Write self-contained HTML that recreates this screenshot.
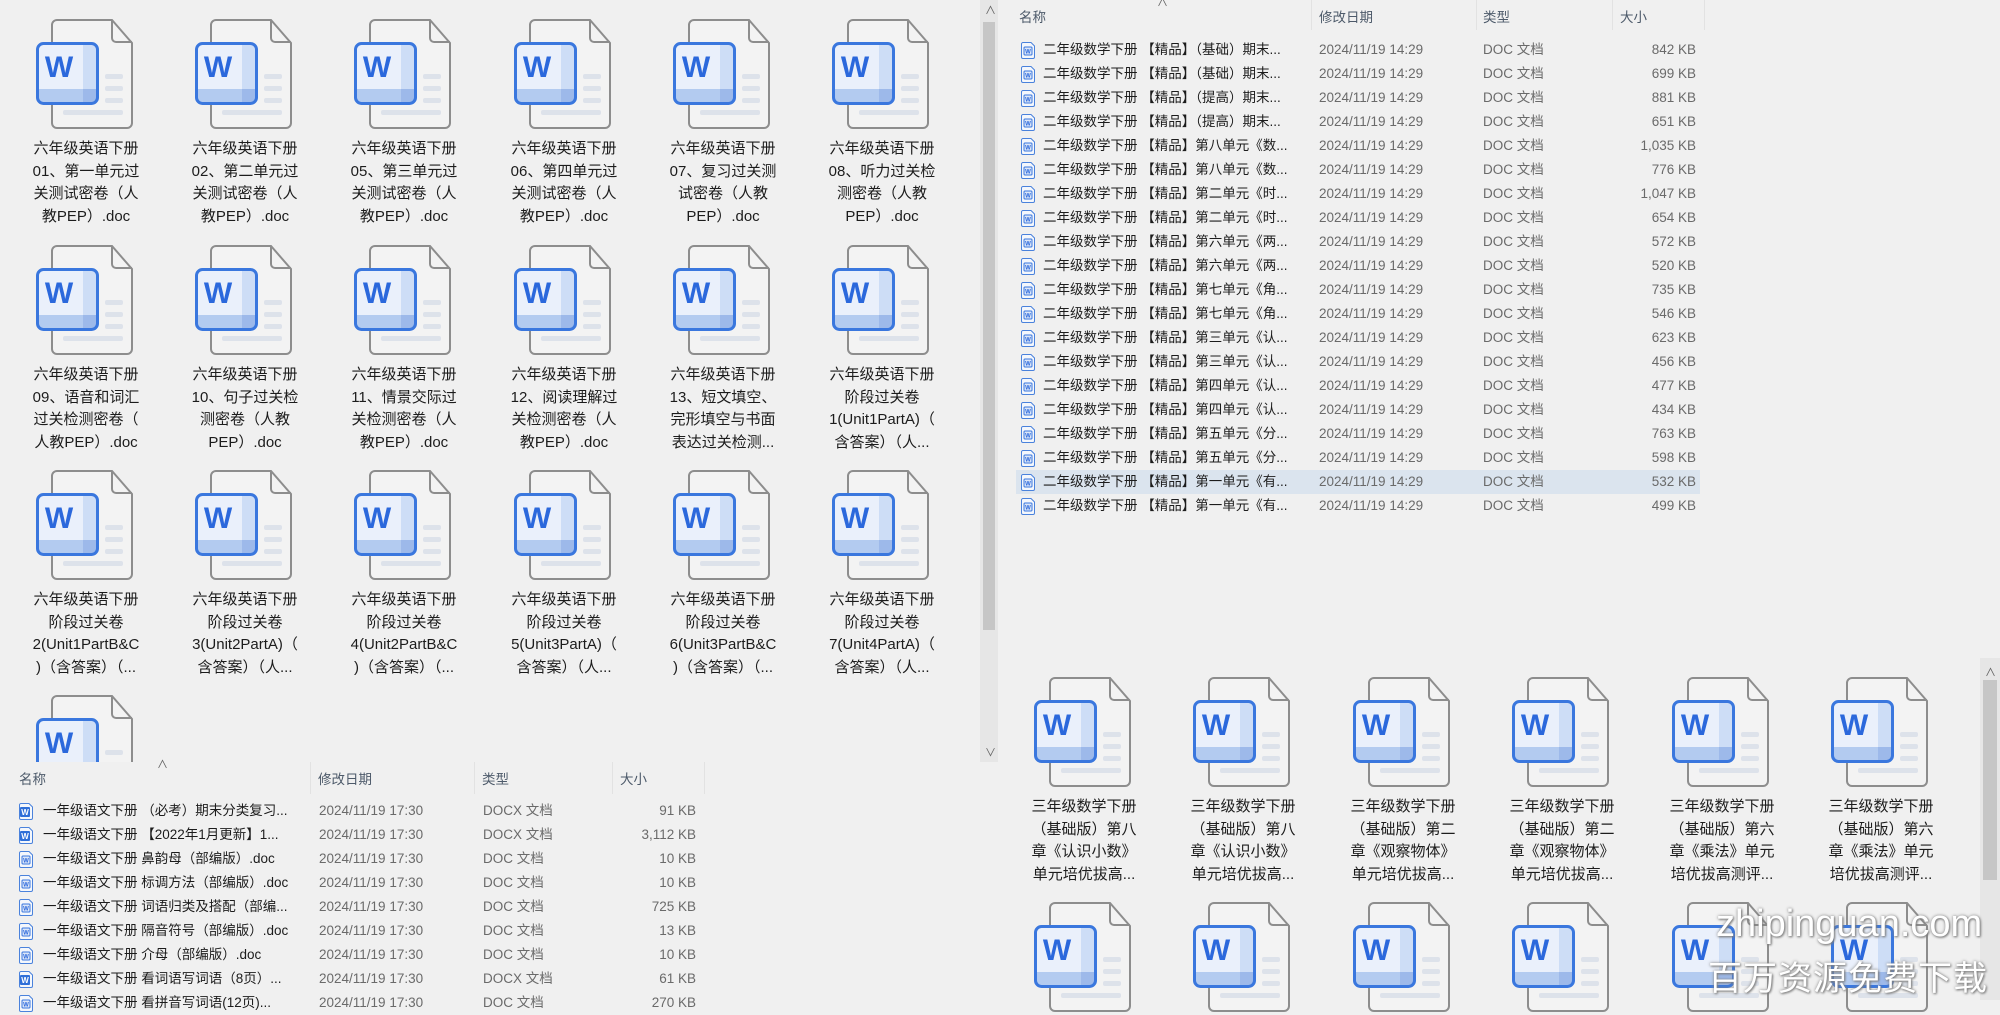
<!DOCTYPE html>
<html><head><meta charset="utf-8"><style>
*{margin:0;padding:0;box-sizing:border-box}
body{width:2000px;height:1000px;overflow:hidden;background:#f0f0f0;font-family:"Liberation Sans","Noto Sans CJK SC",sans-serif;position:relative}
.ic{position:absolute;width:98px;height:110px}
.lb{position:absolute;width:130px;text-align:center;font-size:15px;line-height:22.5px;color:#1c1c1c;white-space:nowrap}
.clip{position:absolute;overflow:hidden}
.hd{position:absolute;font-size:13.5px;color:#4d5a6a}
.sep{position:absolute;width:1px;background:#e2e2e2}
.r{position:absolute;height:24px;font-size:13.5px;line-height:24px;white-space:nowrap}
.r .n{position:absolute;color:#1c1c1c}
.r .d,.r .t{position:absolute;color:#6a6a6a}
.r .s{position:absolute;color:#6a6a6a;text-align:right;width:100px}
.r svg{position:absolute;top:4px}
.sb{position:absolute;background:#e6e6e6}
.th{position:absolute;background:#c6c6c6}
.ar{position:absolute;font-size:11px;color:#606060}
</style></head><body>
<svg width="0" height="0" style="position:absolute">
<defs>
<symbol id="wi" viewBox="0 0 98 110">
<path d="M21 1 H76 L96 24 V104 a5 5 0 0 1 -5 5 H21 a5 5 0 0 1 -5 -5 V6 a5 5 0 0 1 5 -5 Z" fill="#f3f3f3" stroke="#8d8d8d" stroke-width="2"/>
<path d="M76 1 V19 a4 4 0 0 0 4 4 H96" fill="none" stroke="#8d8d8d" stroke-width="2"/>
<rect x="69" y="55" width="18" height="5" rx="2" fill="#dde2ea"/>
<rect x="69" y="67" width="18" height="5" rx="2" fill="#dde2ea"/>
<rect x="69" y="79" width="18" height="5" rx="2" fill="#dde2ea"/>
<rect x="27" y="91" width="60" height="5" rx="2" fill="#dde2ea"/>
<rect x="1.5" y="24.5" width="60" height="60" rx="6" fill="#eaf0fb"/>
<rect x="47" y="26" width="13" height="57" fill="#cdddf6"/>
<rect x="3" y="70" width="57" height="13" fill="#b3cbf0"/>
<rect x="47" y="70" width="13" height="13" fill="#9db9ea"/>
<rect x="1.5" y="24.5" width="60" height="60" rx="6" fill="none" stroke="#3a77de" stroke-width="3"/>
<text x="23" y="58" font-family="Liberation Sans" font-weight="bold" font-size="30" fill="#2b68dc" text-anchor="middle">W</text>
</symbol>
<symbol id="sd" viewBox="0 0 14 17">
<path d="M2 .5 H10 L13.5 4 V15 a1.5 1.5 0 0 1 -1.5 1.5 H2 a1.5 1.5 0 0 1 -1.5 -1.5 V2 a1.5 1.5 0 0 1 1.5 -1.5Z" fill="#f4f7fc" stroke="#4a82dc"/>
<rect x="3" y="5" width="8" height="8" rx="1" fill="#dbe6f8" stroke="#3a77de"/>
<text x="7" y="11.5" font-size="6" font-family="Liberation Sans" font-weight="bold" fill="#2b68dc" text-anchor="middle">W</text>
</symbol>
<symbol id="sx" viewBox="0 0 14 17">
<path d="M2 .5 H10 L13.5 4 V15 a1.5 1.5 0 0 1 -1.5 1.5 H2 a1.5 1.5 0 0 1 -1.5 -1.5 V2 a1.5 1.5 0 0 1 1.5 -1.5Z" fill="#f4f7fc" stroke="#4a82dc"/>
<rect x="1" y="4" width="10" height="10" rx="1" fill="#2f6fd8"/>
<text x="6" y="12" font-size="8" font-family="Liberation Sans" font-weight="bold" fill="#fff" text-anchor="middle">W</text>
</symbol>
</defs></svg>

<!-- top-left grid -->
<div class="clip" style="left:0;top:0;width:978px;height:762px">
<svg class="ic" style="left:36px;top:19px"><use href="#wi"/></svg>
<svg class="ic" style="left:195px;top:19px"><use href="#wi"/></svg>
<svg class="ic" style="left:354px;top:19px"><use href="#wi"/></svg>
<svg class="ic" style="left:514px;top:19px"><use href="#wi"/></svg>
<svg class="ic" style="left:673px;top:19px"><use href="#wi"/></svg>
<svg class="ic" style="left:832px;top:19px"><use href="#wi"/></svg>
<div class="lb" style="left:21px;top:138px">六年级英语下册<br>01、第一单元过<br>关测试密卷（人<br>教PEP）.doc</div>
<div class="lb" style="left:180px;top:138px">六年级英语下册<br>02、第二单元过<br>关测试密卷（人<br>教PEP）.doc</div>
<div class="lb" style="left:339px;top:138px">六年级英语下册<br>05、第三单元过<br>关测试密卷（人<br>教PEP）.doc</div>
<div class="lb" style="left:499px;top:138px">六年级英语下册<br>06、第四单元过<br>关测试密卷（人<br>教PEP）.doc</div>
<div class="lb" style="left:658px;top:138px">六年级英语下册<br>07、复习过关测<br>试密卷（人教<br>PEP）.doc</div>
<div class="lb" style="left:817px;top:138px">六年级英语下册<br>08、听力过关检<br>测密卷（人教<br>PEP）.doc</div>

<svg class="ic" style="left:36px;top:245px"><use href="#wi"/></svg>
<svg class="ic" style="left:195px;top:245px"><use href="#wi"/></svg>
<svg class="ic" style="left:354px;top:245px"><use href="#wi"/></svg>
<svg class="ic" style="left:514px;top:245px"><use href="#wi"/></svg>
<svg class="ic" style="left:673px;top:245px"><use href="#wi"/></svg>
<svg class="ic" style="left:832px;top:245px"><use href="#wi"/></svg>
<div class="lb" style="left:21px;top:364px">六年级英语下册<br>09、语音和词汇<br>过关检测密卷（<br>人教PEP）.doc</div>
<div class="lb" style="left:180px;top:364px">六年级英语下册<br>10、句子过关检<br>测密卷（人教<br>PEP）.doc</div>
<div class="lb" style="left:339px;top:364px">六年级英语下册<br>11、情景交际过<br>关检测密卷（人<br>教PEP）.doc</div>
<div class="lb" style="left:499px;top:364px">六年级英语下册<br>12、阅读理解过<br>关检测密卷（人<br>教PEP）.doc</div>
<div class="lb" style="left:658px;top:364px">六年级英语下册<br>13、短文填空、<br>完形填空与书面<br>表达过关检测...</div>
<div class="lb" style="left:817px;top:364px">六年级英语下册<br>阶段过关卷<br>1(Unit1PartA)（<br>含答案）（人...</div>

<svg class="ic" style="left:36px;top:470px"><use href="#wi"/></svg>
<svg class="ic" style="left:195px;top:470px"><use href="#wi"/></svg>
<svg class="ic" style="left:354px;top:470px"><use href="#wi"/></svg>
<svg class="ic" style="left:514px;top:470px"><use href="#wi"/></svg>
<svg class="ic" style="left:673px;top:470px"><use href="#wi"/></svg>
<svg class="ic" style="left:832px;top:470px"><use href="#wi"/></svg>
<div class="lb" style="left:21px;top:589px">六年级英语下册<br>阶段过关卷<br>2(Unit1PartB&amp;C<br>)（含答案）（...</div>
<div class="lb" style="left:180px;top:589px">六年级英语下册<br>阶段过关卷<br>3(Unit2PartA)（<br>含答案）（人...</div>
<div class="lb" style="left:339px;top:589px">六年级英语下册<br>阶段过关卷<br>4(Unit2PartB&amp;C<br>)（含答案）（...</div>
<div class="lb" style="left:499px;top:589px">六年级英语下册<br>阶段过关卷<br>5(Unit3PartA)（<br>含答案）（人...</div>
<div class="lb" style="left:658px;top:589px">六年级英语下册<br>阶段过关卷<br>6(Unit3PartB&amp;C<br>)（含答案）（...</div>
<div class="lb" style="left:817px;top:589px">六年级英语下册<br>阶段过关卷<br>7(Unit4PartA)（<br>含答案）（人...</div>

<svg class="ic" style="left:36px;top:695px"><use href="#wi"/></svg>
</div>
<div class="sb" style="left:980px;top:0;width:18px;height:762px"></div>
<div class="th" style="left:983px;top:22px;width:12px;height:608px"></div>
<div class="ar" style="left:985px;top:2px">&#8743;</div>
<div class="ar" style="left:985px;top:744px">&#8744;</div>

<!-- bottom-left list -->
<div class="ar" style="left:157px;top:756px">&#8743;</div>
<div class="hd" style="left:19px;top:768px">名称</div>
<div class="hd" style="left:318px;top:768px">修改日期</div>
<div class="hd" style="left:482px;top:768px">类型</div>
<div class="hd" style="left:620px;top:768px">大小</div>
<div class="sep" style="left:310px;top:762px;height:32px"></div>
<div class="sep" style="left:474px;top:762px;height:32px"></div>
<div class="sep" style="left:612px;top:762px;height:32px"></div>
<div class="sep" style="left:704px;top:762px;height:32px"></div>

<div class="r" style="left:0;top:799px;width:710px"><svg style="left:19px" width="14" height="17"><use href="#sx"/></svg><span class="n" style="left:43px">一年级语文下册 （必考）期末分类复习...</span><span class="d" style="left:319px">2024/11/19 17:30</span><span class="t" style="left:483px">DOCX 文档</span><span class="s" style="left:596px">91 KB</span></div>
<div class="r" style="left:0;top:823px;width:710px"><svg style="left:19px" width="14" height="17"><use href="#sx"/></svg><span class="n" style="left:43px">一年级语文下册 【2022年1月更新】1...</span><span class="d" style="left:319px">2024/11/19 17:30</span><span class="t" style="left:483px">DOCX 文档</span><span class="s" style="left:596px">3,112 KB</span></div>
<div class="r" style="left:0;top:847px;width:710px"><svg style="left:19px" width="14" height="17"><use href="#sd"/></svg><span class="n" style="left:43px">一年级语文下册 鼻韵母（部编版）.doc</span><span class="d" style="left:319px">2024/11/19 17:30</span><span class="t" style="left:483px">DOC 文档</span><span class="s" style="left:596px">10 KB</span></div>
<div class="r" style="left:0;top:871px;width:710px"><svg style="left:19px" width="14" height="17"><use href="#sd"/></svg><span class="n" style="left:43px">一年级语文下册 标调方法（部编版）.doc</span><span class="d" style="left:319px">2024/11/19 17:30</span><span class="t" style="left:483px">DOC 文档</span><span class="s" style="left:596px">10 KB</span></div>
<div class="r" style="left:0;top:895px;width:710px"><svg style="left:19px" width="14" height="17"><use href="#sd"/></svg><span class="n" style="left:43px">一年级语文下册 词语归类及搭配（部编...</span><span class="d" style="left:319px">2024/11/19 17:30</span><span class="t" style="left:483px">DOC 文档</span><span class="s" style="left:596px">725 KB</span></div>
<div class="r" style="left:0;top:919px;width:710px"><svg style="left:19px" width="14" height="17"><use href="#sd"/></svg><span class="n" style="left:43px">一年级语文下册 隔音符号（部编版）.doc</span><span class="d" style="left:319px">2024/11/19 17:30</span><span class="t" style="left:483px">DOC 文档</span><span class="s" style="left:596px">13 KB</span></div>
<div class="r" style="left:0;top:943px;width:710px"><svg style="left:19px" width="14" height="17"><use href="#sd"/></svg><span class="n" style="left:43px">一年级语文下册 介母（部编版）.doc</span><span class="d" style="left:319px">2024/11/19 17:30</span><span class="t" style="left:483px">DOC 文档</span><span class="s" style="left:596px">10 KB</span></div>
<div class="r" style="left:0;top:967px;width:710px"><svg style="left:19px" width="14" height="17"><use href="#sx"/></svg><span class="n" style="left:43px">一年级语文下册 看词语写词语（8页）...</span><span class="d" style="left:319px">2024/11/19 17:30</span><span class="t" style="left:483px">DOCX 文档</span><span class="s" style="left:596px">61 KB</span></div>
<div class="r" style="left:0;top:991px;width:710px"><svg style="left:19px" width="14" height="17"><use href="#sd"/></svg><span class="n" style="left:43px">一年级语文下册 看拼音写词语(12页)...</span><span class="d" style="left:319px">2024/11/19 17:30</span><span class="t" style="left:483px">DOC 文档</span><span class="s" style="left:596px">270 KB</span></div>

<!-- top-right list -->
<div class="ar" style="left:1157px;top:-6px">&#8743;</div>
<div class="hd" style="left:1019px;top:6px">名称</div>
<div class="hd" style="left:1319px;top:6px">修改日期</div>
<div class="hd" style="left:1483px;top:6px">类型</div>
<div class="hd" style="left:1620px;top:6px">大小</div>
<div class="sep" style="left:1311px;top:0;height:30px"></div>
<div class="sep" style="left:1476px;top:0;height:30px"></div>
<div class="sep" style="left:1612px;top:0;height:30px"></div>
<div class="sep" style="left:1704px;top:0;height:30px"></div>

<div class="r" style="left:1016px;top:38px;width:684px"><svg style="left:5px" width="14" height="17"><use href="#sd"/></svg><span class="n" style="left:27px">二年级数学下册 【精品】（基础）期末...</span><span class="d" style="left:303px">2024/11/19 14:29</span><span class="t" style="left:467px">DOC 文档</span><span class="s" style="left:580px">842 KB</span></div>
<div class="r" style="left:1016px;top:62px;width:684px"><svg style="left:5px" width="14" height="17"><use href="#sd"/></svg><span class="n" style="left:27px">二年级数学下册 【精品】（基础）期末...</span><span class="d" style="left:303px">2024/11/19 14:29</span><span class="t" style="left:467px">DOC 文档</span><span class="s" style="left:580px">699 KB</span></div>
<div class="r" style="left:1016px;top:86px;width:684px"><svg style="left:5px" width="14" height="17"><use href="#sd"/></svg><span class="n" style="left:27px">二年级数学下册 【精品】（提高）期末...</span><span class="d" style="left:303px">2024/11/19 14:29</span><span class="t" style="left:467px">DOC 文档</span><span class="s" style="left:580px">881 KB</span></div>
<div class="r" style="left:1016px;top:110px;width:684px"><svg style="left:5px" width="14" height="17"><use href="#sd"/></svg><span class="n" style="left:27px">二年级数学下册 【精品】（提高）期末...</span><span class="d" style="left:303px">2024/11/19 14:29</span><span class="t" style="left:467px">DOC 文档</span><span class="s" style="left:580px">651 KB</span></div>
<div class="r" style="left:1016px;top:134px;width:684px"><svg style="left:5px" width="14" height="17"><use href="#sd"/></svg><span class="n" style="left:27px">二年级数学下册 【精品】第八单元《数...</span><span class="d" style="left:303px">2024/11/19 14:29</span><span class="t" style="left:467px">DOC 文档</span><span class="s" style="left:580px">1,035 KB</span></div>
<div class="r" style="left:1016px;top:158px;width:684px"><svg style="left:5px" width="14" height="17"><use href="#sd"/></svg><span class="n" style="left:27px">二年级数学下册 【精品】第八单元《数...</span><span class="d" style="left:303px">2024/11/19 14:29</span><span class="t" style="left:467px">DOC 文档</span><span class="s" style="left:580px">776 KB</span></div>
<div class="r" style="left:1016px;top:182px;width:684px"><svg style="left:5px" width="14" height="17"><use href="#sd"/></svg><span class="n" style="left:27px">二年级数学下册 【精品】第二单元《时...</span><span class="d" style="left:303px">2024/11/19 14:29</span><span class="t" style="left:467px">DOC 文档</span><span class="s" style="left:580px">1,047 KB</span></div>
<div class="r" style="left:1016px;top:206px;width:684px"><svg style="left:5px" width="14" height="17"><use href="#sd"/></svg><span class="n" style="left:27px">二年级数学下册 【精品】第二单元《时...</span><span class="d" style="left:303px">2024/11/19 14:29</span><span class="t" style="left:467px">DOC 文档</span><span class="s" style="left:580px">654 KB</span></div>
<div class="r" style="left:1016px;top:230px;width:684px"><svg style="left:5px" width="14" height="17"><use href="#sd"/></svg><span class="n" style="left:27px">二年级数学下册 【精品】第六单元《两...</span><span class="d" style="left:303px">2024/11/19 14:29</span><span class="t" style="left:467px">DOC 文档</span><span class="s" style="left:580px">572 KB</span></div>
<div class="r" style="left:1016px;top:254px;width:684px"><svg style="left:5px" width="14" height="17"><use href="#sd"/></svg><span class="n" style="left:27px">二年级数学下册 【精品】第六单元《两...</span><span class="d" style="left:303px">2024/11/19 14:29</span><span class="t" style="left:467px">DOC 文档</span><span class="s" style="left:580px">520 KB</span></div>
<div class="r" style="left:1016px;top:278px;width:684px"><svg style="left:5px" width="14" height="17"><use href="#sd"/></svg><span class="n" style="left:27px">二年级数学下册 【精品】第七单元《角...</span><span class="d" style="left:303px">2024/11/19 14:29</span><span class="t" style="left:467px">DOC 文档</span><span class="s" style="left:580px">735 KB</span></div>
<div class="r" style="left:1016px;top:302px;width:684px"><svg style="left:5px" width="14" height="17"><use href="#sd"/></svg><span class="n" style="left:27px">二年级数学下册 【精品】第七单元《角...</span><span class="d" style="left:303px">2024/11/19 14:29</span><span class="t" style="left:467px">DOC 文档</span><span class="s" style="left:580px">546 KB</span></div>
<div class="r" style="left:1016px;top:326px;width:684px"><svg style="left:5px" width="14" height="17"><use href="#sd"/></svg><span class="n" style="left:27px">二年级数学下册 【精品】第三单元《认...</span><span class="d" style="left:303px">2024/11/19 14:29</span><span class="t" style="left:467px">DOC 文档</span><span class="s" style="left:580px">623 KB</span></div>
<div class="r" style="left:1016px;top:350px;width:684px"><svg style="left:5px" width="14" height="17"><use href="#sd"/></svg><span class="n" style="left:27px">二年级数学下册 【精品】第三单元《认...</span><span class="d" style="left:303px">2024/11/19 14:29</span><span class="t" style="left:467px">DOC 文档</span><span class="s" style="left:580px">456 KB</span></div>
<div class="r" style="left:1016px;top:374px;width:684px"><svg style="left:5px" width="14" height="17"><use href="#sd"/></svg><span class="n" style="left:27px">二年级数学下册 【精品】第四单元《认...</span><span class="d" style="left:303px">2024/11/19 14:29</span><span class="t" style="left:467px">DOC 文档</span><span class="s" style="left:580px">477 KB</span></div>
<div class="r" style="left:1016px;top:398px;width:684px"><svg style="left:5px" width="14" height="17"><use href="#sd"/></svg><span class="n" style="left:27px">二年级数学下册 【精品】第四单元《认...</span><span class="d" style="left:303px">2024/11/19 14:29</span><span class="t" style="left:467px">DOC 文档</span><span class="s" style="left:580px">434 KB</span></div>
<div class="r" style="left:1016px;top:422px;width:684px"><svg style="left:5px" width="14" height="17"><use href="#sd"/></svg><span class="n" style="left:27px">二年级数学下册 【精品】第五单元《分...</span><span class="d" style="left:303px">2024/11/19 14:29</span><span class="t" style="left:467px">DOC 文档</span><span class="s" style="left:580px">763 KB</span></div>
<div class="r" style="left:1016px;top:446px;width:684px"><svg style="left:5px" width="14" height="17"><use href="#sd"/></svg><span class="n" style="left:27px">二年级数学下册 【精品】第五单元《分...</span><span class="d" style="left:303px">2024/11/19 14:29</span><span class="t" style="left:467px">DOC 文档</span><span class="s" style="left:580px">598 KB</span></div>
<div class="r" style="left:1016px;top:470px;width:684px;background:#dbe4ee"><svg style="left:5px" width="14" height="17"><use href="#sd"/></svg><span class="n" style="left:27px">二年级数学下册 【精品】第一单元《有...</span><span class="d" style="left:303px">2024/11/19 14:29</span><span class="t" style="left:467px">DOC 文档</span><span class="s" style="left:580px">532 KB</span></div>
<div class="r" style="left:1016px;top:494px;width:684px"><svg style="left:5px" width="14" height="17"><use href="#sd"/></svg><span class="n" style="left:27px">二年级数学下册 【精品】第一单元《有...</span><span class="d" style="left:303px">2024/11/19 14:29</span><span class="t" style="left:467px">DOC 文档</span><span class="s" style="left:580px">499 KB</span></div>

<!-- bottom-right grid -->
<div class="sb" style="left:1980px;top:658px;width:20px;height:342px"></div>
<div class="th" style="left:1983px;top:680px;width:14px;height:200px"></div>
<div class="ar" style="left:1985px;top:664px">&#8743;</div>

<svg class="ic" style="left:1034px;top:677px"><use href="#wi"/></svg>
<svg class="ic" style="left:1193px;top:677px"><use href="#wi"/></svg>
<svg class="ic" style="left:1353px;top:677px"><use href="#wi"/></svg>
<svg class="ic" style="left:1512px;top:677px"><use href="#wi"/></svg>
<svg class="ic" style="left:1672px;top:677px"><use href="#wi"/></svg>
<svg class="ic" style="left:1831px;top:677px"><use href="#wi"/></svg>
<div class="lb" style="left:1019px;top:796px">三年级数学下册<br>（基础版）第八<br>章《认识小数》<br>单元培优拔高...</div>
<div class="lb" style="left:1178px;top:796px">三年级数学下册<br>（基础版）第八<br>章《认识小数》<br>单元培优拔高...</div>
<div class="lb" style="left:1338px;top:796px">三年级数学下册<br>（基础版）第二<br>章《观察物体》<br>单元培优拔高...</div>
<div class="lb" style="left:1497px;top:796px">三年级数学下册<br>（基础版）第二<br>章《观察物体》<br>单元培优拔高...</div>
<div class="lb" style="left:1657px;top:796px">三年级数学下册<br>（基础版）第六<br>章《乘法》单元<br>培优拔高测评...</div>
<div class="lb" style="left:1816px;top:796px">三年级数学下册<br>（基础版）第六<br>章《乘法》单元<br>培优拔高测评...</div>
<svg class="ic" style="left:1034px;top:902px"><use href="#wi"/></svg>
<svg class="ic" style="left:1193px;top:902px"><use href="#wi"/></svg>
<svg class="ic" style="left:1353px;top:902px"><use href="#wi"/></svg>
<svg class="ic" style="left:1512px;top:902px"><use href="#wi"/></svg>
<svg class="ic" style="left:1672px;top:902px"><use href="#wi"/></svg>
<svg class="ic" style="left:1831px;top:902px"><use href="#wi"/></svg>

<div style="position:absolute;left:1716px;top:903px;font-size:38px;color:#fff;text-shadow:0 0 3px #888,1px 1px 2px #777;white-space:nowrap">zhipinguan.com</div>
<div style="position:absolute;left:1708px;top:951px;font-size:34px;color:#fff;text-shadow:0 0 3px #888,1px 1px 2px #777;white-space:nowrap;letter-spacing:1px">百万资源免费下载</div>
</body></html>
